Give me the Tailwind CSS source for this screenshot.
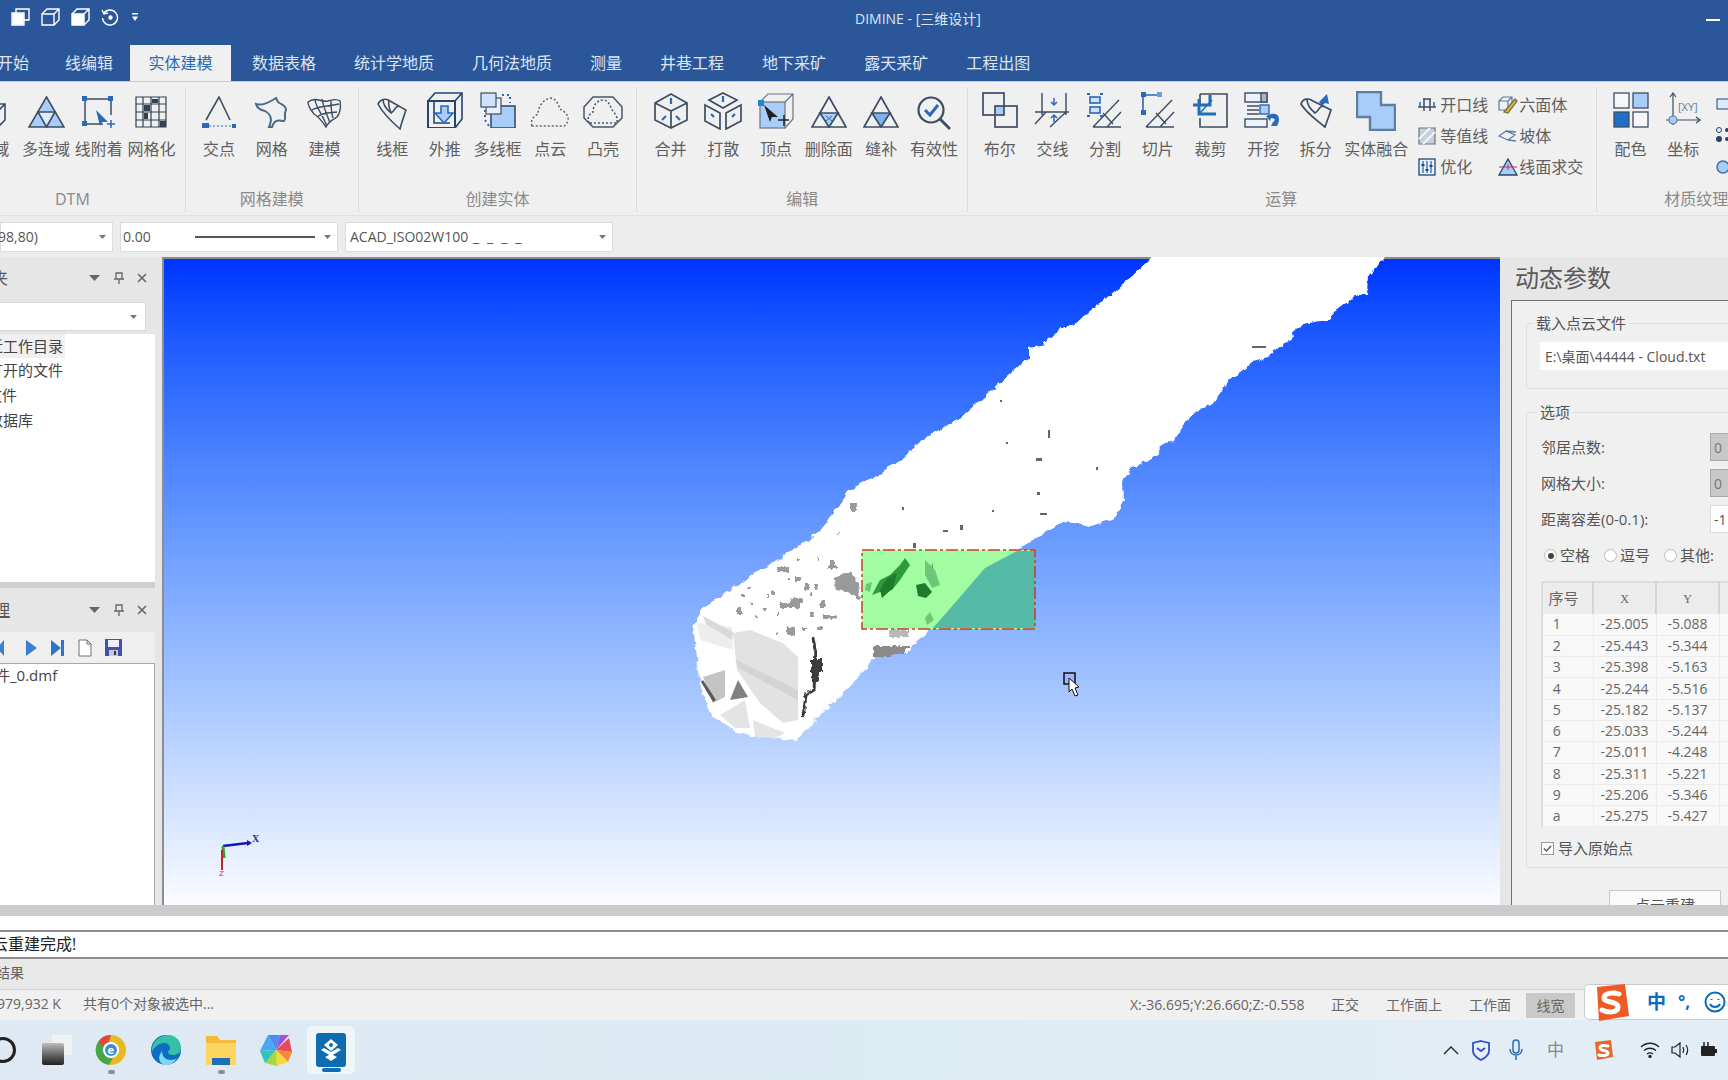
<!DOCTYPE html>
<html lang="zh-CN">
<head>
<meta charset="UTF-8">
<title>DIMINE - [三维设计]</title>
<script src="https://cdn.jsdelivr.net/npm/@tailwindcss/browser@4"></script>
</head>
<body class="m-0 bg-[#f0f0f0]">
<div class="flex h-[1080px] w-[1728px] flex-col overflow-hidden font-['Open_Sans','Noto_Sans_CJK_SC',sans-serif] text-[16px] text-[#5f5f5f]">

  <!-- title bar -->
  <div class="flex h-[44px] shrink-0 bg-[#2b579a] text-[14px] text-[#dfe6f1]">
    <div class="flex w-[855px] items-start gap-[11px] pt-[8px] pl-[11px]">
      <svg width="19" height="18" viewBox="0 0 19 18" fill="none" stroke="#fff" stroke-width="1.4"><path d="M1 5h12v12H1zM5 5V1h13v11h-5"/><path d="M2 6h10v10H2z" fill="#fff"/></svg>
      <svg width="19" height="18" viewBox="0 0 19 18" fill="none" stroke="#fff" stroke-width="1.4"><path d="M1 6h12v11H1zM1 6l5-5h12v11l-5 5M13 6l5-5"/></svg>
      <svg width="19" height="18" viewBox="0 0 19 18" fill="none" stroke="#fff" stroke-width="1.4"><path d="M1 6h12v11H1z" fill="#fff"/><path d="M1 6l5-5h12v11l-5 5M13 6l5-5"/></svg>
      <svg width="19" height="18" viewBox="0 0 19 18" fill="none" stroke="#fff" stroke-width="1.4"><path d="M3 5a7.5 7.5 0 1 1-1.5 5"/><path d="M1 2l2 4 4-1"/><circle cx="9.500" cy="9.500" r="1.500" fill="#fff"/></svg>
      <svg class="mt-[4px]" width="8" height="10" viewBox="0 0 8 10" fill="#fff"><path d="M1 1h6v1.500H1zM1 4.500h6L4 9z"/></svg>
    </div>
    <div class="pt-[8px]">DIMINE - [三维设计]</div>
    <div class="mt-[19px] mr-[8px] ml-auto h-[2px] w-[14px] bg-white"></div>
  </div>

  <!-- ribbon tabs -->
  <div class="flex h-[38px] shrink-0 items-stretch border-b border-[#b9cfe6] bg-[#2b579a] pt-[1px] text-[#dde5f0]">
    <div class="-ml-[22px] flex items-center px-[19px]">开始</div>
    <div class="flex items-center px-[17px]">线编辑</div>
    <div class="flex w-[101px] items-center justify-center bg-[#f0f0f0] text-[#2b6cb0]">实体建模</div>
    <div class="ml-[2px] flex items-center px-[19px]">数据表格</div>
    <div class="flex items-center px-[19px]">统计学地质</div>
    <div class="flex items-center px-[19px]">几何法地质</div>
    <div class="flex items-center px-[19px]">测量</div>
    <div class="flex items-center px-[19px]">井巷工程</div>
    <div class="flex items-center px-[19px]">地下采矿</div>
    <div class="flex items-center px-[19px]">露天采矿</div>
    <div class="flex items-center px-[19px]">工程出图</div>
  </div>

  <!-- ribbon -->
  <div class="-ml-[40px] flex h-[134px] shrink-0 items-start border-b border-[#e2e2e2] bg-[#f0f0f0]">

    <!-- DTM -->
    <div class="mt-[5px] flex h-[125px] flex-col justify-between border-r border-[#dcdcdc] px-[7px] pt-[9px] pb-[1px]">
      <div class="flex">
        <div class="flex w-[52.7px] flex-col items-center gap-[9px]">
          <svg width="32" height="32" viewBox="0 0 32 32" fill="none" stroke="#3d4d63" stroke-width="1.600"><path d="M2 14h20v16H2z" fill="#a9cdf9"/><path d="M2 14l6-6h20v16l-6 6M22 14l6-6"/></svg>
          <div class="whitespace-nowrap">地域</div>
        </div>
        <div class="flex w-[52.7px] flex-col items-center gap-[9px]">
          <svg width="37" height="32" viewBox="0 0 37 32" fill="#a9cdf9" stroke="#3d4d63" stroke-width="1.600"><path d="M18.500 1L36 31H1z"/><path d="M10 16h17l-8.500 15z" fill="#dcebfd"/></svg>
          <div class="whitespace-nowrap">多连域</div>
        </div>
        <div class="flex w-[52.7px] flex-col items-center gap-[9px]">
          <svg width="36" height="32" viewBox="0 0 36 32" fill="none" stroke="#3d4d63" stroke-width="1.500"><path d="M4 3h26M4 3v25M4 28h18M30 3v16"/><g fill="#2a68b8" stroke="none"><rect x="1" y="0" width="5" height="5"/><rect x="27" y="0" width="5" height="5"/><rect x="1" y="25" width="5" height="5"/><path d="M15 14l12 12h-6l-2 4z"/></g><path d="M30 24v8M26 28h8" stroke="#2a68b8"/></svg>
          <div class="whitespace-nowrap">线附着</div>
        </div>
        <div class="flex w-[52.7px] flex-col items-center gap-[9px]">
          <svg width="32" height="32" viewBox="0 0 32 32" fill="none" stroke="#33404f" stroke-width="1.200"><path d="M1 1h30v30H1zM1 8h30M1 16h30M1 24h30M8 1v30M16 1v30M24 1v30"/><g fill="#33404f" stroke="none"><rect x="9" y="9" width="6" height="6"/><rect x="17" y="3" width="6" height="4"/><rect x="25" y="25" width="6" height="6"/><rect x="9" y="17" width="4" height="6"/></g></svg>
          <div class="whitespace-nowrap">网格化</div>
        </div>
      </div>
      <div class="text-center text-[#8a8a8a]">DTM</div>
    </div>

    <!-- 网格建模 -->
    <div class="mt-[5px] flex h-[125px] flex-col justify-between border-r border-[#dcdcdc] px-[7px] pt-[9px] pb-[1px]">
      <div class="flex">
        <div class="flex w-[52.7px] flex-col items-center gap-[9px]">
          <svg width="36" height="32" viewBox="0 0 36 32" fill="none" stroke="#3d4d63" stroke-width="1.600"><path d="M5 24L18 1l11 23"/><path d="M8 30h22" stroke="#2a68b8" stroke-width="1" stroke-dasharray="2 2"/><rect x="1" y="27" width="7" height="6" fill="#2a68b8" stroke="none"/><rect x="31" y="28" width="4" height="4" fill="#2a68b8" stroke="none"/></svg>
          <div class="whitespace-nowrap">交点</div>
        </div>
        <div class="flex w-[52.7px] flex-col items-center gap-[9px]">
          <svg width="36" height="32" viewBox="0 0 36 32" fill="none" stroke="#4a6a8c" stroke-width="2"><path d="M2 8c6 2 12-1 20-6l2 4c4 3 8 3 8 8-3 5 1 8-2 11-5 0-9-3-12 6h-3c3-7 3-12-4-16-5-1-8-3-9-7z"/></svg>
          <div class="whitespace-nowrap">网格</div>
        </div>
        <div class="flex w-[52.7px] flex-col items-center gap-[9px]">
          <svg width="36" height="32" viewBox="0 0 36 32" fill="none" stroke="#3d4d63" stroke-width="1.400"><path d="M2 6c8-6 14 1 20-1 4-1 8-3 12 0 1 6 0 12-3 16-5 3-9 5-11 10-4-6-7-10-12-13C5 14 2 11 2 6zM6 14c8-5 16-3 27-6M11 21c6-5 14-4 20-5M9 4c1 7 6 12 12 26M16 3c1 7 4 13 8 24M25 4c0 6 0 12 2 18"/></svg>
          <div class="whitespace-nowrap">建模</div>
        </div>
      </div>
      <div class="text-center text-[#8a8a8a]">网格建模</div>
    </div>

    <!-- 创建实体 -->
    <div class="mt-[5px] flex h-[125px] flex-col justify-between border-r border-[#dcdcdc] px-[7px] pt-[9px] pb-[1px]">
      <div class="flex">
        <div class="flex w-[52.7px] flex-col items-center gap-[9px]">
          <svg width="34" height="34" viewBox="0 0 34 34" fill="none" stroke="#3d4d63" stroke-width="1.600"><path d="M3 8c2-5 8-6 12-3l16 9c-2 6-4 11-6 19C17 26 8 18 3 8z"/><path d="M8 3c0 6 3 10 8 14 4-2 3-6 8-7M14 4c-1 5 0 8 2 13" /></svg>
          <div class="-mt-[2px] whitespace-nowrap">线框</div>
        </div>
        <div class="flex w-[52.7px] flex-col items-center gap-[9px]">
          <svg width="36" height="36" viewBox="0 0 36 36" fill="none" stroke="#24466e" stroke-width="1.600" class="-mt-[4px]"><path d="M1 9h27v27H1z" stroke-width="2"/><path d="M1 9l7-8h27v26l-7 9M28 9l7-8"/><path d="M7 9v22h16" /><path d="M14 14h7v7h5l-9 10-9-10h6z" fill="#a9cdf9" stroke="#2a68b8"/></svg>
          <div class="whitespace-nowrap">外推</div>
        </div>
        <div class="flex w-[52.7px] flex-col items-center gap-[9px]">
          <svg width="36" height="36" viewBox="0 0 36 36" fill="none" stroke="#2a68b8" stroke-width="1.200" class="-mt-[4px]"><rect x="11" y="14" width="24" height="22" fill="#a9cdf9" stroke="#3d4d63" stroke-width="1.600"/><rect x="6" y="6" width="15" height="16" fill="#e8f1fc" stroke="#3d4d63"/><rect x="1" y="1" width="15" height="14" fill="#cfe2f9" stroke="#3d4d63"/><path d="M22 3h8v8M5 18v10l4 6" stroke-dasharray="2 3" stroke-width="2"/></svg>
          <div class="whitespace-nowrap">多线框</div>
        </div>
        <div class="flex w-[52.7px] flex-col items-center gap-[9px]">
          <svg width="40" height="32" viewBox="0 0 40 32" fill="none" stroke="#5b6675" stroke-width="1.500" stroke-dasharray="2 2"><path d="M2 30c-2-6 2-10 6-12 0-6 4-14 12-16 6 0 8 6 10 11 4 2 9 6 8 11-1 3-2 6-5 6z"/></svg>
          <div class="whitespace-nowrap">点云</div>
        </div>
        <div class="flex w-[52.7px] flex-col items-center gap-[9px]">
          <svg width="40" height="32" viewBox="0 0 40 32" fill="none" stroke="#4a5666" stroke-width="1.500"><path d="M1 11L10 1h20l9 10v11l-9 9H10L1 22z"/><path d="M6 27c-2-5 0-9 4-11 0-6 4-12 10-12 5 0 7 5 9 10 3 3 6 7 5 13z" stroke-dasharray="2 2"/></svg>
          <div class="whitespace-nowrap">凸壳</div>
        </div>
      </div>
      <div class="text-center text-[#8a8a8a]">创建实体</div>
    </div>

    <!-- 编辑 -->
    <div class="mt-[5px] flex h-[125px] flex-col justify-between border-r border-[#dcdcdc] px-[7px] pt-[9px] pb-[1px]">
      <div class="flex">
        <div class="flex w-[52.7px] flex-col items-center gap-[9px]">
          <svg width="36" height="36" viewBox="0 0 36 36" fill="none" stroke="#3d4d63" stroke-width="1.700" class="-mt-[3px]"><path d="M18 1l16 9v17l-16 8-16-8V10zM2 10l16 8 16-8M18 18v17"/><path d="M18 5v6M9 27l4-4M27 27l-4-4" stroke="#2a68b8" stroke-width="2.200"/></svg>
          <div class="-mt-[1px] whitespace-nowrap">合并</div>
        </div>
        <div class="flex w-[52.7px] flex-col items-center gap-[9px]">
          <svg width="40" height="38" viewBox="0 0 40 38" fill="none" stroke="#3d4d63" stroke-width="1.700" class="-mt-[4px]"><path d="M20 1l14 7-14 8L6 8zM2 13l15 8v16L2 29zM38 13l-15 8v16l15-8z"/><path d="M20 4v6M8 22l3 3M32 22l-3 3" stroke="#2a68b8" stroke-width="2.200"/></svg>
          <div class="-mt-[2px] whitespace-nowrap">打散</div>
        </div>
        <div class="flex w-[52.7px] flex-col items-center gap-[9px]">
          <svg width="36" height="36" viewBox="0 0 36 36" fill="none" stroke="#6b7582" stroke-width="1.200" class="-mt-[3px]"><rect x="2" y="9" width="25" height="26" fill="#a9cdf9"/><path d="M2 9l8-8h25v25l-8 9M27 9l8-8"/><rect x="0" y="7" width="6" height="6" fill="#1f86c8" stroke="none"/><path d="M6 12l14 12h-6l-2 5z" fill="#222" stroke="none"/><path d="M26 22v11M20 27h11" stroke="#222" stroke-width="1.500"/></svg>
          <div class="-mt-[1px] whitespace-nowrap">顶点</div>
        </div>
        <div class="flex w-[52.7px] flex-col items-center gap-[9px]">
          <svg width="36" height="32" viewBox="0 0 36 32" fill="none" stroke="#3d4d63" stroke-width="1.700"><path d="M18 1l17 30H1z"/><path d="M9 17h18L18 31z" fill="#a9cdf9"/><path d="M15 20l6 5M21 20l-6 5" stroke="#2a68b8" stroke-width="1"/></svg>
          <div class="whitespace-nowrap">删除面</div>
        </div>
        <div class="flex w-[52.7px] flex-col items-center gap-[9px]">
          <svg width="36" height="32" viewBox="0 0 36 32" fill="none" stroke="#3d4d63" stroke-width="1.700"><path d="M18 1l17 30H1z"/><path d="M9 17h18L18 31z" fill="#7db2ef"/></svg>
          <div class="whitespace-nowrap">缝补</div>
        </div>
        <div class="flex w-[52.7px] flex-col items-center gap-[9px]">
          <svg width="34" height="34" viewBox="0 0 34 34" fill="none" stroke="#3d4d63" stroke-width="2.200"><circle cx="14" cy="14" r="12.500"/><path d="M23 23l10 10" stroke-width="2.800"/><path d="M8 14l5 5 8-10" stroke="#2a68b8" stroke-width="3"/></svg>
          <div class="-mt-[2px] whitespace-nowrap">有效性</div>
        </div>
      </div>
      <div class="text-center text-[#8a8a8a]">编辑</div>
    </div>

    <!-- 运算 -->
    <div class="mt-[5px] flex h-[125px] flex-col justify-between border-r border-[#dcdcdc] pt-[9px] pr-[7px] pb-[1px] pl-[5px]">
      <div class="flex">
        <div class="flex w-[52.7px] flex-col items-center gap-[9px]">
          <svg width="36" height="36" viewBox="0 0 36 36" fill="none" stroke="#3d4d63" stroke-width="1.700" class="-mt-[4px]"><rect x="13" y="14" width="9" height="9" fill="#a9cdf9" stroke="none"/><rect x="1" y="1" width="21" height="22"/><rect x="13" y="14" width="22" height="21"/></svg>
          <div class="whitespace-nowrap">布尔</div>
        </div>
        <div class="flex w-[52.7px] flex-col items-center gap-[9px]">
          <svg width="36" height="36" viewBox="0 0 36 36" fill="none" stroke="#3d4d63" stroke-width="1.400" class="-mt-[4px]"><path d="M8 1v22M32 1v22M1 20h34M1 32l11-12M16 35l16-15"/><path d="M20 6v6M20 24v6M17 10l3 3 3-3M17 26l3-3 3 3" stroke="#2a68b8" stroke-width="1.500"/></svg>
          <div class="whitespace-nowrap">交线</div>
        </div>
        <div class="flex w-[52.7px] flex-col items-center gap-[9px]">
          <svg width="36" height="36" viewBox="0 0 36 36" fill="none" stroke="#3d4d63" stroke-width="1.400" class="-mt-[4px]"><path d="M6 35h28M6 35L32 8M20 35l14-15M16 21l10 11"/><rect x="3" y="5" width="10" height="6" fill="#cfe2f9" stroke="#2a68b8" stroke-width="1.600"/><rect x="3" y="15" width="10" height="6" fill="#cfe2f9" stroke="#2a68b8" stroke-width="1.600"/><path d="M0 2h3M13 2h3M0 24h3M13 24h3" stroke="#2a68b8" stroke-width="2"/></svg>
          <div class="whitespace-nowrap">分割</div>
        </div>
        <div class="flex w-[52.7px] flex-col items-center gap-[9px]">
          <svg width="36" height="36" viewBox="0 0 36 36" fill="none" stroke="#3d4d63" stroke-width="1.400" class="-mt-[4px]"><path d="M6 35h28M6 35L32 8M20 35l14-15M16 21l10 11"/><path d="M3 3h16M3 3v17" stroke="#2a68b8" stroke-width="1.600"/><rect x="1" y="0" width="5" height="5" fill="#2a68b8" stroke="none"/><rect x="17" y="0" width="5" height="5" fill="#6e9fd8" stroke="none"/><rect x="1" y="18" width="5" height="5" fill="#2a68b8" stroke="none"/></svg>
          <div class="whitespace-nowrap">切片</div>
        </div>
        <div class="flex w-[52.7px] flex-col items-center gap-[9px]">
          <svg width="36" height="36" viewBox="0 0 36 36" fill="none" stroke="#3d4d63" stroke-width="1.600" class="-mt-[4px]"><path d="M8 2h27v33H8v-9M8 12V2"/><path d="M1 13h17v-10M7 7v15h17" stroke="#1f6fb8" stroke-width="3"/><path d="M8 21L20 8" stroke="#1f6fb8" stroke-width="1.500"/></svg>
          <div class="whitespace-nowrap">裁剪</div>
        </div>
        <div class="flex w-[52.7px] flex-col items-center gap-[9px]">
          <svg width="38" height="36" viewBox="0 0 38 36" fill="none" stroke="#3d4d63" stroke-width="1.400" class="-mt-[4px]"><rect x="1" y="1" width="22" height="9" fill="#eaf2fc"/><rect x="17" y="1" width="6" height="9" fill="#a9b6c6"/><rect x="1" y="27" width="22" height="8" fill="#eaf2fc"/><path d="M3 14h12M3 18h12M3 22h12"/><rect x="16" y="13" width="9" height="9" fill="#a9cdf9" stroke="#2a68b8"/><path d="M27 22c8-2 10 5 6 12h-6l2-4c3-2 2-4-2-4l-1 3-4-5z" fill="#2a68b8" stroke="none"/></svg>
          <div class="whitespace-nowrap">开挖</div>
        </div>
        <div class="flex w-[52.7px] flex-col items-center gap-[9px]">
          <svg width="34" height="36" viewBox="0 0 34 36" fill="none" stroke="#3d4d63" stroke-width="1.700" class="-mt-[4px]"><path d="M2 12c2-6 8-6 12-3l18 9c-2 6-4 11-6 17C18 28 8 22 2 12z"/><path d="M8 7c0 6 3 10 8 14 4-2 3-6 8-7"/><path d="M20 10l8-8 2 10-4-1-3 3z" fill="#2a68b8" stroke="none"/></svg>
          <div class="whitespace-nowrap">拆分</div>
        </div>
        <div class="flex w-[68px] flex-col items-center gap-[9px]">
          <svg width="40" height="40" viewBox="0 0 40 40" fill="#a9cdf9" stroke="#5d7da3" stroke-width="2.400" class="-mt-[5px] -mb-[3px]"><path d="M1 1h24v13h14v25H14V26H1z"/></svg>
          <div class="whitespace-nowrap">实体融合</div>
        </div>
        <div class="-mt-[7px] ml-[8px] grid h-[93px] grid-cols-[80px_91px] grid-rows-3 items-center">
          <div class="flex items-center gap-[4px]">
            <svg width="18" height="18" viewBox="0 0 18 18" fill="none" stroke="#3d4d63" stroke-width="1.500"><path d="M0 11h18M5 3h8M6 3v12M12 3v12" /><path d="M2 6v5M16 6v5" stroke="#2a68b8"/></svg>
            <span class="whitespace-nowrap">开口线</span>
          </div>
          <div class="flex items-center gap-[1px]">
            <svg width="20" height="18" viewBox="0 0 20 18" fill="none" stroke="#5d7da3" stroke-width="1.200"><path d="M1 5h9v9H1zM1 5l4-4h9v9l-4 4M10 5l4-4"/><path d="M6 16l11-13 2 2L10 17z" fill="#d9b050" stroke="#7a6a3c"/></svg>
            <span class="whitespace-nowrap">六面体</span>
          </div>
          <div class="flex items-center gap-[4px]">
            <svg width="18" height="18" viewBox="0 0 18 18" fill="#c6d0dc" stroke="#6b7582" stroke-width="1.200"><path d="M1 1h16v16H1z"/><path d="M1 12L12 1M5 17L17 5" stroke="#f4f4f4" stroke-width="2"/></svg>
            <span class="whitespace-nowrap">等值线</span>
          </div>
          <div class="flex items-center gap-[1px]">
            <svg width="20" height="18" viewBox="0 0 20 18" fill="none" stroke="#5d7da3" stroke-width="1.300"><path d="M1 9l7-5 9 4-7 5zM10 13l8 1M8 4l10 1"/></svg>
            <span class="whitespace-nowrap">坡体</span>
          </div>
          <div class="flex items-center gap-[4px]">
            <svg width="18" height="18" viewBox="0 0 18 18" fill="#e8f1fc" stroke="#24466e" stroke-width="1.300"><rect x="1" y="1" width="16" height="16"/><path d="M5 3v12M9 3v12M13 3v12" stroke="#2a68b8"/><path d="M3.500 6h3v2h-3zM7.500 11h3v2h-3zM11.500 7h3v2h-3z" fill="#24466e" stroke="none"/></svg>
            <span class="whitespace-nowrap">优化</span>
          </div>
          <div class="flex items-center gap-[1px]">
            <svg width="20" height="18" viewBox="0 0 20 18" fill="#a9cdf9" stroke="#24466e" stroke-width="1.300"><path d="M10 1l9 16H1z"/><path d="M1 9h18M10 6v6" stroke="#d0305a" stroke-width="1"/></svg>
            <span class="whitespace-nowrap">线面求交</span>
          </div>
        </div>
      </div>
      <div class="text-center text-[#8a8a8a]">运算</div>
    </div>

    <!-- 材质纹理 -->
    <div class="mt-[5px] flex h-[125px] w-[198px] shrink-0 flex-col justify-between px-[7px] pt-[9px] pb-[1px]">
      <div class="flex">
        <div class="flex w-[52.7px] flex-col items-center gap-[9px]">
          <svg width="36" height="36" viewBox="0 0 36 36" stroke="#3d4d63" stroke-width="1.300" class="-mt-[4px]"><rect x="1" y="1" width="15" height="15" fill="#f6f6f6"/><rect x="20" y="1" width="15" height="15" fill="#a9cdf9"/><rect x="1" y="20" width="15" height="15" fill="#1f6fc8"/><rect x="20" y="20" width="15" height="15" fill="#f6f6f6"/></svg>
          <div class="whitespace-nowrap">配色</div>
        </div>
        <div class="flex w-[52.7px] flex-col items-center gap-[9px]">
          <svg width="36" height="36" viewBox="0 0 36 36" fill="none" stroke="#3d4d63" stroke-width="1.200" class="-mt-[4px]"><path d="M8 33V1M5 5l3-4 3 4M1 28h34M31 25l4 3-4 3"/><circle cx="8" cy="28" r="4" fill="#a9cdf9" stroke="#5d7da3"/><text x="13" y="19" font-size="11" fill="#5d7da3" stroke="none">[XY]</text></svg>
          <div class="whitespace-nowrap">坐标</div>
        </div>
        <div class="-mt-[7px] flex h-[93px] w-[20px] flex-col justify-around pl-[6px]">
          <svg width="14" height="14" viewBox="0 0 14 14" fill="#dcebfd" stroke="#24466e"><rect x="1" y="2" width="14" height="10"/></svg>
          <svg width="14" height="18" viewBox="0 0 14 18" fill="#24466e"><circle cx="3" cy="4" r="2.500" fill="none" stroke="#24466e"/><circle cx="3" cy="13" r="3"/><circle cx="11" cy="4" r="2"/><circle cx="11" cy="13" r="2"/></svg>
          <svg width="14" height="14" viewBox="0 0 14 14" fill="#a9cdf9" stroke="#3d6ea8" stroke-width="1.500"><circle cx="7" cy="7" r="6"/></svg>
        </div>
      </div>
      <div class="pl-[60px] whitespace-nowrap text-[#8a8a8a]">材质纹理</div>
    </div>
  </div>

  <!-- property toolbar -->
  <div class="flex h-[41px] shrink-0 items-start gap-[7px] bg-[#ececec] pt-[6px] text-[14px] text-[#555]">
    <div class="flex h-[30px] w-[113px] items-center justify-between border border-[#dcdcdc] bg-white pr-[6px] pb-[1px]">
      <span class="-ml-[3px] whitespace-nowrap">98,80)</span>
      <svg width="7" height="4" fill="#777"><path d="M0 0h7L3.500 4z"/></svg>
    </div>
    <div class="flex h-[30px] w-[218px] items-center border border-[#dcdcdc] bg-white pr-[6px] pb-[1px] pl-[2px]">
      <span class="w-[72px]">0.00</span>
      <span class="h-[2px] w-[120px] bg-[#555]"></span>
      <svg class="ml-auto" width="7" height="4" fill="#777"><path d="M0 0h7L3.500 4z"/></svg>
    </div>
    <div class="flex h-[30px] w-[268px] items-center justify-between border border-[#dcdcdc] bg-white pr-[6px] pb-[1px] pl-[4px]">
      <span class="whitespace-nowrap">ACAD_ISO02W100 <span class="ml-[1px] tracking-[8px]">____</span></span>
      <svg width="7" height="4" fill="#777"><path d="M0 0h7L3.500 4z"/></svg>
    </div>
  </div>

  <!-- main area -->
  <div class="flex h-[648px] shrink-0 bg-[#e6e6e6]">

    <!-- left panels -->
    <div class="flex w-[155px] shrink-0 flex-col text-[15px] text-[#444]">
      <div class="flex h-[45px] shrink-0 items-center pr-[8px] pb-[4px]">
        <span class="-ml-[8px] text-[16px] text-[#555]">夹</span>
        <svg class="ml-auto" width="11" height="6" fill="#666"><path d="M0 0h11L5.500 6z"/></svg>
        <svg class="ml-[14px]" width="10" height="12" viewBox="0 0 10 12" fill="none" stroke="#666" stroke-width="1.300"><path d="M2 1h6v6H2zM0 7h10M5 7v5"/></svg>
        <svg class="ml-[13px]" width="10" height="10" viewBox="0 0 10 10" fill="none" stroke="#666" stroke-width="1.600"><path d="M1 1l8 8M9 1L1 9"/></svg>
      </div>
      <div class="mb-[3px] ml-[-2px] flex h-[29px] w-[148px] shrink-0 items-center justify-end border border-[#d8d8d8] bg-white pr-[8px]">
        <svg width="7" height="4" fill="#777"><path d="M0 0h7L3.500 4z"/></svg>
      </div>
      <div class="h-[248px] shrink-0 bg-white">
        <div class="flex h-[24px] w-[65px] items-center overflow-hidden bg-[#f0f0f0] whitespace-nowrap"><span class="-ml-[12px]">近工作目录</span></div>
        <div class="flex h-[25px] items-center whitespace-nowrap"><span class="-ml-[12px]">打开的文件</span></div>
        <div class="flex h-[25px] items-center whitespace-nowrap"><span class="-ml-[13px]">文件</span></div>
        <div class="flex h-[25px] items-center whitespace-nowrap"><span class="-ml-[12px]">数据库</span></div>
      </div>
      <div class="h-[6px] shrink-0 bg-[#d0d0d0]"></div>
      <div class="flex h-[44px] shrink-0 items-center pr-[8px]">
        <span class="-ml-[6px] text-[16px] text-[#555] underline">理</span>
        <svg class="ml-auto" width="11" height="6" fill="#666"><path d="M0 0h11L5.500 6z"/></svg>
        <svg class="ml-[14px]" width="10" height="12" viewBox="0 0 10 12" fill="none" stroke="#666" stroke-width="1.300"><path d="M2 1h6v6H2zM0 7h10M5 7v5"/></svg>
        <svg class="ml-[13px]" width="10" height="10" viewBox="0 0 10 10" fill="none" stroke="#666" stroke-width="1.600"><path d="M1 1l8 8M9 1L1 9"/></svg>
      </div>
      <div class="flex h-[31px] shrink-0 items-center gap-[11px] bg-[#efefef]">
        <svg class="-ml-[3px]" width="7" height="16" viewBox="0 0 7 16" fill="#3d7fd0"><path d="M7 0v16L0 8z"/></svg>
        <svg class="ml-[11px]" width="11" height="16" viewBox="0 0 11 16" fill="#3d7fd0"><path d="M0 0l11 8-11 8z"/></svg>
        <svg class="ml-[3px]" width="13" height="16" viewBox="0 0 13 16" fill="#2f74c8"><path d="M0 0l10 8-10 8zM10 0h3v16h-3z"/></svg>
        <svg class="ml-[3px]" width="14" height="18" viewBox="0 0 14 18" fill="#fff" stroke="#6a7078"><path d="M1 1h8l4 4v12H1zM9 1v4h4"/></svg>
        <svg class="ml-[2px]" width="17" height="17" viewBox="0 0 17 17"><path d="M0 0h17v17H0z" fill="#3f52b0"/><path d="M3 1h11v7H3z" fill="#eef"/><path d="M4 11h9v6H4z" fill="#c8c8d8"/><path d="M9 12h2v4H9z" fill="#334"/></svg>
      </div>
      <div class="min-h-0 flex-1 border-t border-r border-[#a8a8a8] bg-white whitespace-nowrap"><span class="-ml-[5px] inline-block text-[15px]">件_0.dmf</span></div>
    </div>

    <!-- 3D viewport -->
    <div class="relative ml-[7px] w-[1338px] shrink-0 border-t-2 border-l-2 border-[#8d8d8d] bg-linear-to-b from-[#0033ff] to-[#fbfcff]">
      <svg class="absolute -top-[2px] -left-[2px]" width="1338" height="648" viewBox="162 257 1338 648">
        <defs>
          <filter id="rough" x="-5%" y="-5%" width="110%" height="110%" color-interpolation-filters="sRGB">
            <feTurbulence type="fractalNoise" baseFrequency="0.14" numOctaves="2" seed="4"/>
            <feDisplacementMap in="SourceGraphic" scale="7" xChannelSelector="R" yChannelSelector="G"/>
          </filter>
          <filter id="speck" x="-5%" y="-5%" width="110%" height="110%" color-interpolation-filters="sRGB">
            <feTurbulence type="fractalNoise" baseFrequency="0.3" numOctaves="1" seed="9"/>
            <feDisplacementMap in="SourceGraphic" scale="5" xChannelSelector="R" yChannelSelector="G"/>
          </filter>
        </defs>
        <path filter="url(#rough)" fill="#fff" d="M1151 258L1128 280L1110 295L1085 315L1072 327L1063 327L1042 345L1029 347L1029 360L1020 365L1000 383L959 419L920 441L904 457L876 476L849 490L843 500L820 530L803 543L780 558L747 578L703 608L693 627L697 657L702 693L713 717L737 732L753 737L797 740L817 718L860 677L878 650L908 653L918 640L933 627L960 597L980 570L1020 548L1063 522L1090 525L1114 518L1123 503L1122 480L1132 468L1155 457L1163 445L1175 440L1182 425L1195 413L1215 400L1230 380L1253 362L1268 358L1278 347L1293 338L1292 332L1307 323L1328 320L1337 308L1355 297L1367 295L1368 275L1383 260L1386 245L1160 245Z"/>

        <!-- mesh facets on the end of the tunnel -->
        <path fill="#e2e2e2" d="M733 633L750 630L783 643L798 657L798 720L783 723L760 703L737 670Z"/>
        <path fill="#d4d4d4" d="M736 660L798 690L798 700L738 668Z"/>
        <path fill="#ededed" d="M697 623L732 627L733 650L700 640Z"/>
        <path fill="#d8d8d8" d="M703 616L733 632L732 640L706 624Z"/>
        <path fill="#c4c4c4" d="M703 677L725 670L725 697L713 703Z"/>
        <path fill="#808080" d="M738 680L730 700L748 697Z"/>
        <path fill="#5a5a5a" d="M703 680L716 700L713 702L701 682Z"/>
        <path fill="#e4e4e4" d="M720 715L745 700L750 728L735 728Z M753 720L785 733L775 738L755 737Z"/>

        <!-- dark vein and grey holes in the point cloud -->
        <path filter="url(#speck)" fill="none" stroke="#3a3a3a" stroke-width="3" d="M813 637L815 650M816 650L814 690L806 695L804 710L802 718"/>
        <path filter="url(#speck)" fill="#3c3c3c" d="M811 660h8v-2h3v14h-3v10h-8z"/>
        <g filter="url(#speck)">
          <path fill="#9a9a9a" d="M834 578L850 572L858 582L860 600L848 592L836 590Z"/>
          <path fill="#9a9a9a" d="M850 503h7v8h-7zM777 567h12v5h-12zM827 565h10v4h-10zM805 583h4v8h-4zM788 578h3v2h-3zM748 587h3v2h-3zM767 595h2v2h-2zM810 593h2v4h-2zM737 608h5v6h-5zM750 603h2v2h-2zM763 608h3v2h-3zM777 613h2v2h-2zM787 627h8v8h-8zM823 615h14v4h-14zM810 612h4v5h-4zM817 627h5v3h-5zM802 627h4v3h-4zM777 632h2v2h-2zM780 603h20v5h-20zM790 598h13v5h-13zM795 577h5v4h-5zM837 532h4v2h-4zM817 558h2v3h-2zM797 559h3v3h-3zM820 600h5v8h-5zM815 585h3v5h-3zM755 615h3v3h-3zM742 595h2v2h-2zM772 590h2v5h-2zM830 560h4v5h-4z"/>
          <path fill="#8a8a8a" d="M873 646h37v3h-6v5h-14v3h-17z"/>
          <path fill="#b8b8b8" d="M889 630h19v7h-19z"/>
        </g>
        <path fill="#666" shape-rendering="crispEdges" d="M1252 346h14v2h-14zM1048 430h2v8h-2zM1036 458h6v3h-6zM1037 492h3v3h-3zM1040 513h6v2h-6zM1096 467h2v3h-2zM960 525h3v5h-3zM943 530h5v2h-5zM913 543h3v5h-3zM992 510h2v2h-2zM902 507h2v3h-2zM1042 513h5v2h-5zM1000 400h2v2h-2zM1006 442h2v2h-2z"/>

        <!-- selection rectangle -->
        <rect x="862" y="550" width="173" height="79" fill="#a2fca2"/>
        <path fill="#55bba6" d="M1035 551L1017 551L985 568L960 597L933 628L1035 628Z"/>
        <path fill="#2f9a3c" d="M872 595L880 580L890 575L900 565L905 558L910 565L900 580L892 590L880 592Z"/>
        <path fill="#1c7c2a" d="M880 590L887 578L897 573L893 588L882 598Z M916 585L925 583L932 592L926 598L918 596Z M932 562L934 575L936 580L931 578Z"/>
        <path fill="#6cc878" d="M925 560L935 570L940 585L932 588L925 575Z M866 584L872 582L870 592L865 590Z M925 618L930 612L934 620L927 625Z"/>
        <rect x="862" y="550" width="173" height="79" fill="none" stroke="#cf3a30" stroke-width="1.500" stroke-dasharray="12 3 3 3"/>

        <!-- cursor -->
        <rect x="1064" y="673" width="11" height="11" fill="#9fb7f8" stroke="#111" stroke-width="1.500"/>
        <path fill="#fff" stroke="#111" d="M1069 678L1069 692L1072 689L1075 696L1078 695L1075 688L1079 687Z"/>

        <!-- axis -->
        <path fill="none" stroke="#1414b8" stroke-width="2.500" d="M223 846L248 843"/>
        <path fill="#1414b8" d="M247 840L252 843L247 846Z"/>
        <path fill="none" stroke="#22b022" stroke-width="3" d="M223 846L224 858"/>
        <path fill="none" stroke="#c82020" stroke-width="2" d="M222 850L222 870"/>
        <text x="252" y="842" font-family="Liberation Serif" font-size="10" font-weight="700" fill="#2a2aa0">X</text>
        <text x="219" y="876" font-family="Liberation Sans" font-size="8" fill="#d03030">Z</text>
      </svg>
    </div>

    <!-- dynamic parameter panel -->
    <div class="ml-[8px] flex w-[228px] shrink-0 flex-col">
      <div class="flex h-[43px] shrink-0 items-center pb-[2px] pl-[7px] text-[24px] text-[#5a5a5a]">动态参数</div>
      <div class="ml-[3px] h-0 min-h-0 flex-1 overflow-hidden border-t border-l border-[#707070] bg-[#f0f0f0] pl-[14px] text-[15px] text-[#555]">

        <fieldset class="mt-[12px] h-[76px] w-[260px] rounded-[3px] border border-[#dfdfdf] pl-[13px]">
          <legend class="-ml-[7px] px-[3px] text-[15px] leading-[20px]">载入点云文件</legend>
          <div class="mt-[9px] flex h-[28px] w-[250px] items-center bg-white pl-[5px] text-[14px] text-[#555]">E:\桌面\44444 - Cloud.txt</div>
        </fieldset>

        <fieldset class="mt-[13px] h-[466px] w-[260px] rounded-[3px] border border-[#dfdfdf] pl-[14px]">
          <legend class="-ml-[4px] px-[3px] text-[15px] leading-[20px]">选项</legend>
          <div class="mt-[7px] flex h-[36px] items-center">
            <span class="w-[169px]">邻居点数:</span>
            <span class="flex h-[28px] w-[60px] items-center border border-[#a8a8a8] bg-[#c8c8c8] pl-[3px] text-[14px] text-[#777]">0</span>
          </div>
          <div class="flex h-[36px] items-center">
            <span class="w-[169px]">网格大小:</span>
            <span class="flex h-[28px] w-[60px] items-center border border-[#a8a8a8] bg-[#c8c8c8] pl-[3px] text-[14px] text-[#777]">0</span>
          </div>
          <div class="flex h-[36px] items-center">
            <span class="w-[169px] whitespace-nowrap">距离容差(0-0.1):</span>
            <span class="flex h-[28px] w-[60px] items-center border border-[#dcdcdc] bg-white pl-[3px] text-[14px] text-[#555]">-1</span>
          </div>
          <div class="flex h-[37px] items-center pl-[3px]">
            <span class="mr-[3px] flex h-[13px] w-[13px] items-center justify-center rounded-full border border-[#bbb] bg-white"><span class="h-[6px] w-[6px] rounded-full bg-[#444]"></span></span>
            <span class="w-[44px]">空格</span>
            <span class="mr-[3px] h-[13px] w-[13px] rounded-full border border-[#bbb] bg-white"></span>
            <span class="w-[44px]">逗号</span>
            <span class="mr-[3px] h-[13px] w-[13px] rounded-full border border-[#bbb] bg-white"></span>
            <span>其他:</span>
          </div>
          <table class="mt-[7px] w-[240px] table-fixed border-collapse border-t-2 border-l-2 border-[#dcdcdc] text-[14px] leading-none text-[#666] [&_td]:h-[21.3px] [&_td]:border-r [&_td]:border-b [&_td]:border-[#ececec] [&_td]:bg-[#f8f8f8] [&_td]:p-0 [&_td]:text-center [&_th]:h-[32px] [&_th]:border-r-2 [&_th]:border-[#d4d4d4] [&_th]:bg-[#ececec] [&_th]:font-normal">
            <thead>
              <tr><th class="w-[51px] pr-[8px] text-[15px]">序号</th><th class="w-[63px] font-['Liberation_Serif'] text-[12px]">X</th><th class="w-[63px] font-['Liberation_Serif'] text-[12px]">Y</th><th class="w-[63px]"></th></tr>
            </thead>
            <tbody>
              <tr><td class="!pr-[22px]">1</td><td>-25.005</td><td>-5.088</td><td></td></tr>
              <tr><td class="!pr-[22px]">2</td><td>-25.443</td><td>-5.344</td><td></td></tr>
              <tr><td class="!pr-[22px]">3</td><td>-25.398</td><td>-5.163</td><td></td></tr>
              <tr><td class="!pr-[22px]">4</td><td>-25.244</td><td>-5.516</td><td></td></tr>
              <tr><td class="!pr-[22px]">5</td><td>-25.182</td><td>-5.137</td><td></td></tr>
              <tr><td class="!pr-[22px]">6</td><td>-25.033</td><td>-5.244</td><td></td></tr>
              <tr><td class="!pr-[22px]">7</td><td>-25.011</td><td>-4.248</td><td></td></tr>
              <tr><td class="!pr-[22px]">8</td><td>-25.311</td><td>-5.221</td><td></td></tr>
              <tr><td class="!pr-[22px]">9</td><td>-25.206</td><td>-5.346</td><td></td></tr>
              <tr><td class="!pr-[22px]">a</td><td>-25.275</td><td>-5.427</td><td></td></tr>
            </tbody>
          </table>
          <div class="mt-[10px] flex items-center gap-[4px] text-[15px]">
            <svg width="13" height="13" viewBox="0 0 13 13" fill="#fff" stroke="#999"><rect x=".5" y=".5" width="12" height="12"/><path d="M3 6.500l2.500 2.500L10 4" fill="none" stroke="#555" stroke-width="1.400"/></svg>
            导入原始点
          </div>
        </fieldset>

        <div class="mt-[22px] ml-[83px] flex h-[30px] w-[112px] items-center justify-center border border-[#c8c8c8] bg-[#fafafa] text-[15px]">点云重建</div>
      </div>
    </div>
  </div>

  <!-- command output -->
  <div class="h-[11px] shrink-0 bg-[#cbcbcb]"></div>
  <div class="h-[14px] shrink-0 bg-white"></div>
  <div class="flex h-[29px] shrink-0 items-center border-y-2 border-[#8c8c8c] bg-white pb-[2px] text-[16px] whitespace-nowrap text-[#222]"><span class="-ml-[8px]">云重建完成!</span></div>
  <div class="flex h-[31px] shrink-0 items-center border-b border-[#d4d4d4] bg-[#e8e8e8] pb-[3px] text-[14px] whitespace-nowrap"><span class="-ml-[4px]">结果</span></div>

  <!-- status bar -->
  <div class="flex h-[30px] shrink-0 items-center bg-[#f0f0f0] text-[14px] whitespace-nowrap text-[#666]">
    <span class="-ml-[3px] w-[86px] shrink-0 -translate-y-[2px]">979,932 K</span>
    <span class="w-[1047px] shrink-0 -translate-y-[2px]">共有0个对象被选中...</span>
    <span class="w-[201px] shrink-0 -translate-y-[1px]">X:-36.695;Y:26.660;Z:-0.558</span>
    <span class="w-[55px] shrink-0 -translate-y-[1px]">正交</span>
    <span class="w-[83px] shrink-0 -translate-y-[1px]">工作面上</span>
    <span class="w-[57px] shrink-0 -translate-y-[1px]">工作面</span>
    <span class="flex h-[25px] w-[49px] shrink-0 items-center justify-center bg-[#c9c9c9]">线宽</span>
    <div class="relative ml-[9px] flex h-[36px] w-[150px] shrink-0 -translate-y-[3px] items-center rounded-l-[5px] border border-[#c8ccd2] bg-white pl-[6px]">
      <svg width="38" height="37" viewBox="0 0 38 37"><path fill="#ef5a24" d="M6 3l28-3 4 32-30 5z"/><path fill="none" stroke="#fff" stroke-width="5" stroke-linecap="round" d="M28 10c-6-2-15-1-15 4s14 3 14 9-10 6-16 3"/></svg>
      <span class="ml-[18px] text-[19px] font-bold text-[#0d6cc0]">中</span>
      <span class="ml-[12px] text-[17px] font-bold text-[#0d6cc0]">°,</span>
      <svg class="ml-[14px]" width="22" height="22" viewBox="0 0 22 22" fill="none" stroke="#0d6cc0" stroke-width="2"><circle cx="11" cy="11" r="9.500"/><path d="M6 13c2 4 8 4 10 0M7.500 8v1M14.500 8v1"/></svg>
    </div>
  </div>

  <!-- taskbar -->
  <div class="flex h-[60px] shrink-0 items-center bg-linear-to-r from-[#dfe9f3] via-[#dcecf3] to-[#e4edf6]">
    <div class="-ml-[10px] h-[26px] w-[26px] shrink-0 rounded-full border-[3px] border-[#222]"></div>
    <div class="relative ml-[26px] h-[30px] w-[30px] shrink-0">
      <div class="absolute top-0 right-0 h-[20px] w-[20px] bg-[#f2f2f2]"></div>
      <div class="absolute bottom-0 left-0 h-[22px] w-[22px] rounded-[2px] bg-linear-to-b from-[#bdbdbd] to-[#222]"></div>
    </div>
    <div class="relative ml-[15px] flex h-[48px] w-[48px] shrink-0 items-center justify-center">
      <svg width="32" height="32" viewBox="0 0 32 32"><circle cx="16" cy="16" r="15" fill="#e8b923"/><path d="M16 1a15 15 0 0 0-13 7l7 12z" fill="#dc4a3a"/><path d="M3 8a15 15 0 0 0 11 23l6-11z" fill="#4aa54a"/><circle cx="16" cy="16" r="8" fill="#fff"/><circle cx="16" cy="16" r="6" fill="#3b8fd0"/><text x="12.500" y="20" font-size="11" font-weight="700" fill="#fff">e</text></svg>
      <div class="absolute bottom-0 h-[4px] w-[7px] rounded-full bg-[#8b8f94]"></div>
    </div>
    <div class="ml-[7px] flex h-[48px] w-[48px] shrink-0 items-center justify-center">
      <svg width="32" height="32" viewBox="0 0 32 32"><circle cx="16" cy="16" r="15" fill="#0f6cc4"/><path d="M2 18C1 6 12 1 18 1c8 0 13 6 13 13 0 5-4 7-8 7-3 0-5-1-5-3 0-1 2-2 2-4 0-3-3-5-6-5C9 9 4 13 2 18z" fill="#35c0a8"/><path d="M12 17c0 6 4 9 9 9 3 0 5-1 6-2-3 5-7 7-11 7-5 0-10-6-4-14z" fill="#7fd8f0"/></svg>
    </div>
    <div class="relative ml-[7px] flex h-[48px] w-[48px] shrink-0 items-center justify-center">
      <svg width="30" height="32" viewBox="0 0 30 32"><path d="M0 2h11l3 4h16v25H0z" fill="#f4b93a"/><path d="M0 9h30v22H0z" fill="#fcd660"/><path d="M6 24h18v7H6z" fill="#1f6fb8"/></svg>
      <div class="absolute bottom-0 h-[4px] w-[7px] rounded-full bg-[#8b8f94]"></div>
    </div>
    <div class="ml-[7px] flex h-[48px] w-[48px] shrink-0 items-center justify-center">
      <svg width="32" height="32" viewBox="0 0 32 32"><path d="M16 16L8 1h12z" fill="#4a8cf0"/><path d="M16 16l4-15h9z" fill="#a44fd8"/><path d="M16 16L29 4l3 14z" fill="#e84a5a"/><path d="M16 16l16 2-4 10z" fill="#f58a30"/><path d="M16 16l12 12-11 4z" fill="#f8d838"/><path d="M16 16l1 16-12-3z" fill="#a4d83c"/><path d="M16 16L5 29 0 17z" fill="#34c4b8"/><path d="M16 16L0 17 8 1z" fill="#4aa8f0"/></svg>
    </div>
    <div class="relative ml-[7px] flex h-[48px] w-[48px] shrink-0 items-center justify-center rounded-[5px] bg-white/50">
      <svg width="30" height="34" viewBox="0 0 30 34"><rect width="30" height="34" rx="3" fill="#0f6cb0"/><path d="M15 6l7 6-7 6-7-6z" fill="#fff"/><path d="M5 17l10 6 10-6-3-2-7 4-7-4zM9 24l6 4 6-4-6-3z" fill="#fff"/><circle cx="15" cy="12" r="2" fill="#0f6cb0"/></svg>
      <div class="absolute bottom-[2px] h-[4px] w-[19px] rounded-full bg-[#0f6cb8]"></div>
    </div>

    <!-- tray -->
    <div class="ml-auto flex items-center pr-[10px]">
      <svg width="16" height="9" viewBox="0 0 16 9" fill="none" stroke="#222" stroke-width="1.300"><path d="M1 8l7-7 7 7"/></svg>
      <svg class="ml-[13px]" width="18" height="21" viewBox="0 0 18 21" fill="#e8eefc" stroke="#3050d0" stroke-width="1.800"><path d="M9 1l8 2v8c0 4-4 7-8 9-4-2-8-5-8-9V3z"/><path d="M5 8l4 3 4-3" fill="none"/></svg>
      <svg class="ml-[19px]" width="14" height="22" viewBox="0 0 14 22" fill="none" stroke="#2a6cb0" stroke-width="1.500"><rect x="4" y="1" width="6" height="13" rx="3"/><path d="M1 10c0 8 12 8 12 0M7 17v4"/></svg>
      <span class="ml-[24px] text-[17px] text-[#888]">中</span>
      <svg class="ml-[29px]" width="20" height="20" viewBox="0 0 20 20"><path fill="#e8682c" d="M2 2l16-2 2 17-16 3z"/><path fill="none" stroke="#fff" stroke-width="3" stroke-linecap="round" d="M15 6c-3-1-8-1-8 2s8 2 8 5-6 3-9 2"/></svg>
      <svg class="ml-[27px]" width="20" height="16" viewBox="0 0 20 16" fill="none" stroke="#222" stroke-width="1.300"><path d="M1 5c5-5 13-5 18 0M4 8.500c3.500-3 8.500-3 12 0M7 12c2-1.500 4-1.500 6 0"/><circle cx="10" cy="14.500" r="1" fill="#222"/></svg>
      <svg class="ml-[11px]" width="20" height="18" viewBox="0 0 20 18" fill="none" stroke="#222" stroke-width="1.200"><path d="M1 6h3l5-4v14l-5-4H1zM12 6c1 2 1 4 0 6M15 4c2 3 2 7 0 10"/></svg>
      <svg class="ml-[9px]" width="18" height="18" viewBox="0 0 18 18" fill="#222"><rect x="1" y="5" width="14" height="10" rx="1"/><rect x="15" y="8" width="2" height="4"/><path d="M4 1v4M8 1v4" stroke="#222" stroke-width="1.500"/></svg>
    </div>
  </div>
</div>
</body>
</html>
